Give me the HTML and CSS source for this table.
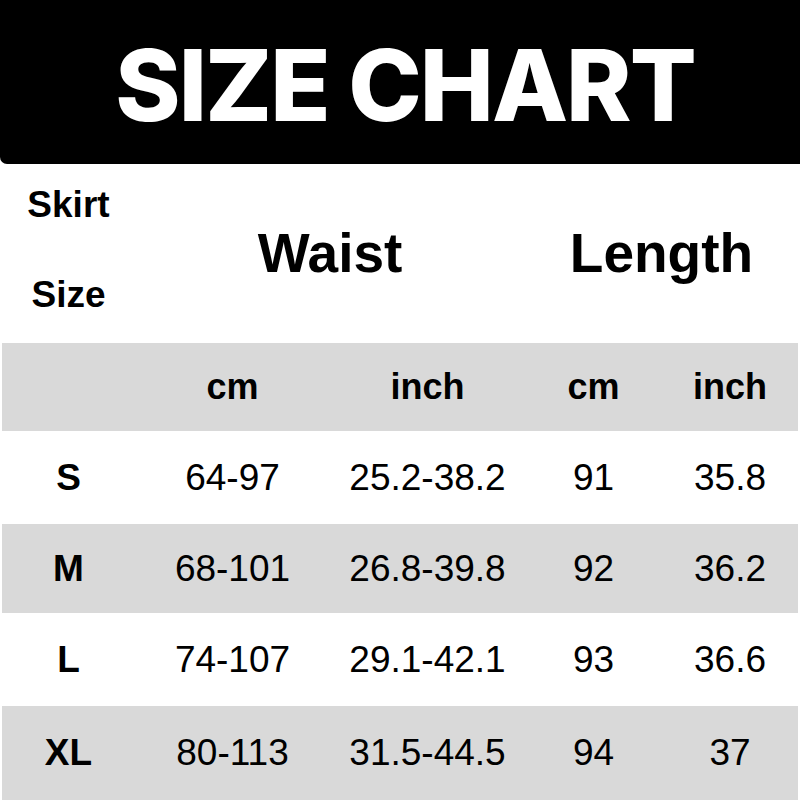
FILE: index.html
```html
<!DOCTYPE html>
<html>
<head>
<meta charset="utf-8">
<link rel="stylesheet" href="styles.css">
</head>
<body>
<div class="banner"><h1 class="title">SIZE CHART</h1></div>
<div class="chart">
  <div class="cell head-size"><span>Skirt</span><span>Size</span></div>
  <div class="cell group span2">Waist</div>
  <div class="cell group span2">Length</div>

  <div class="cell unit gray"></div>
  <div class="cell unit gray">cm</div>
  <div class="cell unit gray">inch</div>
  <div class="cell unit gray">cm</div>
  <div class="cell unit gray">inch</div>

  <div class="cell size">S</div>
  <div class="cell num">64-97</div>
  <div class="cell num">25.2-38.2</div>
  <div class="cell num">91</div>
  <div class="cell num">35.8</div>

  <div class="cell size gray">M</div>
  <div class="cell num gray">68-101</div>
  <div class="cell num gray">26.8-39.8</div>
  <div class="cell num gray">92</div>
  <div class="cell num gray">36.2</div>

  <div class="cell size">L</div>
  <div class="cell num">74-107</div>
  <div class="cell num">29.1-42.1</div>
  <div class="cell num">93</div>
  <div class="cell num">36.6</div>

  <div class="cell size gray">XL</div>
  <div class="cell num gray">80-113</div>
  <div class="cell num gray">31.5-44.5</div>
  <div class="cell num gray">94</div>
  <div class="cell num gray">37</div>
</div>
</body>
</html>
```

FILE: styles.css
```css
html, body {
  margin: 0;
  padding: 0;
  background: #ffffff;
}
body {
  width: 800px;
  height: 800px;
  overflow: hidden;
  font-family: "Liberation Sans", Arial, sans-serif;
  color: #000;
}
.banner {
  height: 164px;
  background: #000;
  border-bottom-left-radius: 7px;
  display: flex;
  align-items: center;
  justify-content: center;
}
.title {
  margin: 0;
  padding-top: 6px;
  padding-left: 10px;
  font-family: Inter, "Open Sans", sans-serif;
  font-weight: 800;
  font-size: 99px;
  line-height: 1;
  letter-spacing: -2px;
  color: #fff;
}
.chart {
  margin: 0 2px;
  display: grid;
  grid-template-columns: 133px 195px 195px 137px 136px;
  grid-template-rows: 179px 88px 93px 89px 93px 94px;
}
.cell {
  display: flex;
  align-items: center;
  justify-content: center;
  white-space: nowrap;
}
.gray {
  background: #d9d9d9;
}
.span2 {
  grid-column: span 2;
}
.head-size {
  flex-direction: column;
  gap: 48px;
  padding-bottom: 8px;
  font-weight: 700;
  font-size: 37px;
  line-height: 42px;
}
.group {
  font-weight: 700;
  font-size: 55px;
  padding-bottom: 2px;
}
.unit {
  font-weight: 700;
  font-size: 36px;
}
.size {
  font-weight: 700;
  font-size: 37px;
}
.num {
  font-size: 37px;
}
```
